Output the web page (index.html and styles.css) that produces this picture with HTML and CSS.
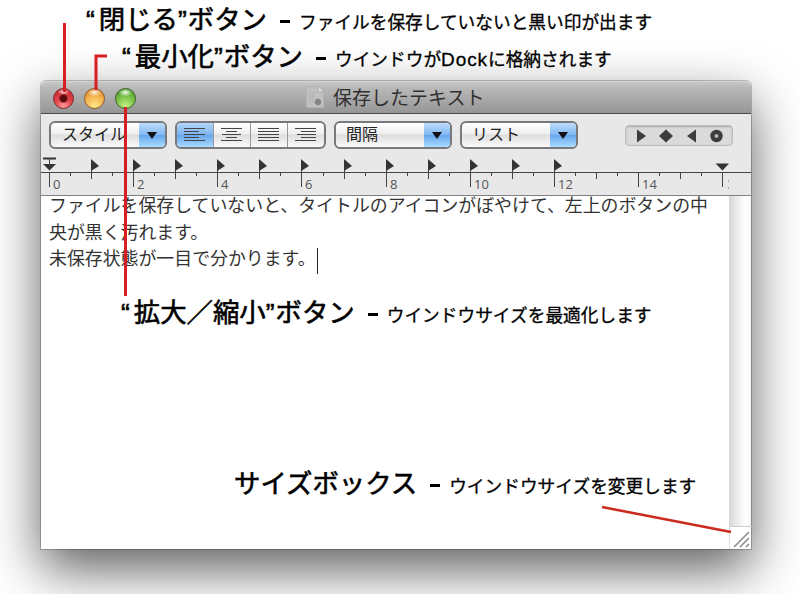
FILE: index.html
```
<!DOCTYPE html>
<html lang="ja">
<head>
  <meta charset="UTF-8" />
  <meta name="viewport" content="width=device-width, initial-scale=1.0"/>
  <title>保存したテキスト</title>
  <link rel="stylesheet" href="styles.css">
</head>
<body>

<div class="window">
  <div class="title-bar">
    <div class="lights">
      <span class="light red"></span>
      <span class="light yellow"></span>
      <span class="light green"></span>
    </div>
    <svg class="doc-icon" width="18" height="22" viewBox="0 0 18 22">
      <path d="M.5 .5H12L17.500 6V21.500H.5Z" fill="#c0c0c0" stroke="#b2b2b2"/>
      <path d="M12 .5V6H17.500" fill="#ddd" stroke="#aaa"/>
      <path d="M3 7h7M3 10h6M3 13h5M3 16h5" stroke="#a9a9a9" stroke-dasharray="2 1"/>
      <circle cx="12" cy="16" r="3.200" fill="#858585"/>
    </svg>
    <span class="title">保存したテキスト</span>
  </div>

  <div class="toolbar">
    <div class="popup style">
      <span class="label">スタイル</span>
      <span class="arrow"></span>
    </div>
    <div class="align">
      <span class="seg active"><svg width="22" height="16"><path d="M0 1.500h21M0 4.500h15M0 7.500h21M0 10.500h15M0 13.500h21"/></svg></span>
      <span class="seg"><svg width="22" height="16"><path d="M0 1.500h21M5 4.500h11M1 7.500h19M5 10.500h11M0 13.500h21"/></svg></span>
      <span class="seg"><svg width="22" height="16"><path d="M0 1.500h21M0 4.500h21M0 7.500h21M0 10.500h21M0 13.500h21"/></svg></span>
      <span class="seg"><svg width="22" height="16"><path d="M0 1.500h21M6 4.500h15M2 7.500h19M6 10.500h15M0 13.500h21"/></svg></span>
    </div>
    <div class="popup spacing">
      <span class="label">間隔</span>
      <span class="arrow"></span>
    </div>
    <div class="popup list">
      <span class="label">リスト</span>
      <span class="arrow"></span>
    </div>
    <div class="tabs">
      <svg width="106" height="19" viewBox="0 0 106 19">
        <path d="M11 3.500L20 10L11 16.500Z"/>
        <path d="M40 3.500L47 10L40 16.500L33 10Z"/>
        <path d="M70 3.500L61 10L70 16.500Z"/>
        <circle cx="90.500" cy="10" r="6.200"/>
        <circle cx="90.500" cy="10" r="2" class="hole"/>
      </svg>
    </div>
  </div>

  <svg class="ruler" id="ruler" width="710" height="41" viewBox="41 155 710 41">
    <path d="M41 172.500H751" class="line"/>
    <path d="M43 158.500H56" class="thick"/>
    <path d="M43 164H56L49.500 170.500Z" class="mark"/>
    <path d="M49.500 158V166" class="line"/>
    <path d="M715.500 163.500H729L722.500 170.500Z" class="mark"/>
    <path d="M41 195.500H751" class="edge"/>
  </svg>

  <div class="content">
    <div class="text">
      ファイルを保存していないと、タイトルのアイコンがぼやけて、左上のボタンの中<br>
      央が黒く汚れます。<br>
      未保存状態が一目で分かります。<span class="caret"></span>
    </div>
    <div class="scroll">
      <div class="track"></div>
      <svg class="grip" width="22" height="22" viewBox="0 0 22 22">
        <path d="M4 20L19 5M10 20L19 11M16 20L19 17" />
      </svg>
    </div>
  </div>
</div>

<!-- Callouts on top of the window -->
<div class="note close"><span class="big"><q>閉じる</q>ボタン</span><i class="dash"></i><span>ファイルを保存していないと黒い印が出ます</span></div>
<div class="note mini"><span class="big"><q>最小化</q>ボタン</span><i class="dash"></i><span>ウインドウが<span class="latin">Dock</span>に格納されます</span></div>
<div class="note zoom"><span class="big"><q>拡大／縮小</q>ボタン</span><i class="dash"></i><span>ウインドウサイズを最適化します</span></div>
<div class="note size"><span class="big">サイズボックス</span><i class="dash"></i><span>ウインドウサイズを変更します</span></div>

<svg class="leads" width="800" height="594">
  <path d="M64.500 23V92M107 56H96V90M125.500 107V296"/>
  <path class="size-lead" d="M602 507L731 532"/>
</svg>

<script>
  const ruler = document.getElementById("ruler");
  const step = 42.08;
  let marks = "";

  for (let i = 0; i <= 16; i++) {
    const x = Math.round(49 + i * step) + 0.5;
    const half = Math.round(49 + (i + 0.5) * step) + 0.5;
    const top = i > 0 && i < 13 ? 160 : 172;
    marks += `<path class="line" d="M${x} ${top}V${i % 2 ? 179 : 187}"/>`;
    if (i > 0 && i < 13) {
      marks += `<path class="mark" d="M${x - 0.5} 159L${x + 7.5} 166L${x - 0.5} 171Z"/>`;
    }
    if (i < 16) {
      marks += `<path class="line" d="M${half} 172V176"/>`;
    }
    if (i % 2 == 0 && i < 16) {
      marks += `<text x="${x + 3.5}" y="189">${i}</text>`;
    }
  }
  marks += `<path d="M728.500 180V190" class="cut"/>`;
  ruler.innerHTML += marks;
</script>

</body>
</html>
```
FILE: styles.css
```
body {
  margin: 0;
  width: 800px;
  height: 594px;
  position: relative;
  overflow: hidden;
  background: white;
  color: black;
  font-family: "Liberation Sans", "Noto Sans CJK JP", sans-serif;
}

.window {
  width: 710px;
  height: 468px;
  margin: 81px 0 0 41px;
  display: flex;
  flex-direction: column;
  background: white;
  border-radius: 5px 5px 0 0;
  box-shadow: 0 0 0 1px rgba(0, 0, 0, 0.22), 0 20px 52px rgba(0, 0, 0, 0.64);
}

body::before {
  content: "";
  display: table;
}

.title-bar {
  height: 32px;
  flex: none;
  display: flex;
  align-items: center;
  background: linear-gradient(#c9c9c9, #b9b9b9 20%, #969696);
  border-bottom: 1px solid #4c4c4c;
  border-radius: 5px 5px 0 0;
  box-shadow: inset 0 1px #d4d4d4;
}

.lights {
  display: flex;
  gap: 10px;
  padding: 2px 0 0 12px;
  width: 253px;
}

.light {
  box-sizing: border-box;
  width: 21px;
  height: 21px;
  border-radius: 50%;
  border: 1.500px solid;
}

.red {
  border-color: #7c2a2c;
  background: radial-gradient(ellipse 6px 3px at 50% 15%, #ffe1e1, transparent),
    radial-gradient(circle at 50% 50%, #5a090c 0 3px, transparent 5px),
    radial-gradient(circle at 50% 90%, #ff9d9d, #e3474c 40%, #bd1f27);
}

.yellow {
  border-color: #8d5926;
  background: radial-gradient(ellipse 7px 4px at 50% 18%, #fff5df, transparent),
    radial-gradient(circle at 50% 90%, #ffe88b, #f5b04a 55%, #c87321);
}

.green {
  border-color: #36621d;
  background: radial-gradient(ellipse 7px 4px at 50% 18%, #f1ffe9, transparent),
    radial-gradient(circle at 50% 90%, #c5f286, #75bd45 55%, #3b8423);
}

.doc-icon {
  margin-right: 9px;
}

.title {
  padding-top: 3px;
  font-size: 19px;
  line-height: 29px;
  color: #303030;
}

.toolbar {
  height: 41px;
  flex: none;
  box-sizing: border-box;
  padding: 7px 0 0 8px;
  display: flex;
  align-items: flex-start;
  background: #e8e8e8;
}

.popup,
.align {
  box-sizing: border-box;
  height: 28px;
  display: flex;
  overflow: hidden;
  border: 2px solid #77797d;
  border-radius: 6px;
  background: linear-gradient(#fff, #eee 45%, #dedede 50%, #fafafa);
}

.popup {
  width: 118px;
  margin-right: 8px;
}

.label {
  flex: 1;
  padding-left: 11px;
  font-size: 16px;
  line-height: 23px;
  color: #222;
}

.list .label {
  padding-left: 10px;
}

.spacing .label {
  padding-left: 10px;
}

.arrow {
  width: 26px;
  display: flex;
  align-items: center;
  justify-content: center;
  background: linear-gradient(#bedcfa, #82b8f2 48%, #66a7ed 52%, #abdcff);
}

.arrow::after {
  content: "";
  border: 5px solid transparent;
  border-top: 7px solid #111;
  border-bottom: 0;
}

.align {
  width: 151px;
  margin-right: 8px;
}

.seg {
  flex: 1;
  display: flex;
  align-items: center;
  justify-content: center;
  border-left: 1px solid #999;
}

.seg:first-child {
  border-left: 0;
}

.seg path {
  stroke: #444;
  stroke-width: 1.200;
}

.active {
  background: linear-gradient(#b4d5f8, #7db3ef 48%, #69a8ec 52%, #a9daff);
}

.tabs {
  box-sizing: border-box;
  width: 108px;
  height: 21px;
  margin: 4px 18px 0 auto;
  border: 1px solid #bdbdbd;
  border-radius: 4px;
  background: #dadada;
  box-shadow: inset 0 1px 2px #aaa;
}

.tabs svg {
  display: block;
  fill: #3c3c3c;
}

.tabs .hole {
  fill: #b5b5b5;
}

.ruler {
  display: block;
  flex: none;
  background: #e8e8e8;
}

.ruler .line {
  stroke: #444;
  fill: none;
}

.ruler .edge {
  stroke: #808080;
}

.ruler .thick {
  stroke: #333;
  stroke-width: 2;
}

.ruler .mark {
  fill: #333;
}

.ruler .cut {
  stroke: #aaa;
  stroke-dasharray: 2 5;
}

.ruler text {
  font: 13px "Open Sans", sans-serif;
  fill: #555;
}

.content {
  flex: 1;
  min-height: 0;
  display: flex;
}

.text {
  flex: 1;
  padding-left: 8px;
  margin-top: -3px;
  font-size: 17.900px;
  line-height: 26.700px;
  white-space: nowrap;
  color: #333;
}

.caret {
  display: inline-block;
  width: 1px;
  height: 26px;
  margin-left: 1px;
  background: #222;
  vertical-align: -9px;
}

.scroll {
  width: 22px;
  display: flex;
  flex-direction: column;
}

.track {
  flex: 1;
  background: linear-gradient(90deg, #d6d6d6, #eee 40%, #fff 75%, #f7f7f7);
}

.grip {
  border-top: 1px solid #ccc;
  border-left: 1px solid #ddd;
  fill: none;
  stroke: #888;
  stroke-width: 1.500;
}

.note {
  position: absolute;
  display: flex;
  align-items: baseline;
  white-space: nowrap;
  font-size: 17.700px;
  line-height: 36px;
  -webkit-text-stroke: 0.300px black;
}

.note .big {
  font-size: 26.400px;
  -webkit-text-stroke: 0.600px black;
}

.note q {
  quotes: "“" "”";
}

.note q::before {
  margin-right: 4px;
}

.note q::after {
  margin-right: 1px;
}

.latin {
  font-size: 19px;
  letter-spacing: 0.900px;
}

.dash {
  width: 10px;
  height: 3px;
  margin: 0 9px 0 13px;
  background: black;
  position: relative;
  top: -6px;
}

.close {
  left: 86px;
  top: 2px;
}

.mini {
  left: 122px;
  top: 39px;
}

.zoom {
  left: 121px;
  top: 295px;
}

.size {
  left: 234px;
  top: 466px;
}

.leads {
  position: absolute;
  left: 0;
  top: 0;
  fill: none;
  stroke: #d81e25;
  stroke-width: 3;
}

.size-lead {
  stroke: #cc2a1c;
  stroke-width: 2.500;
}
```
